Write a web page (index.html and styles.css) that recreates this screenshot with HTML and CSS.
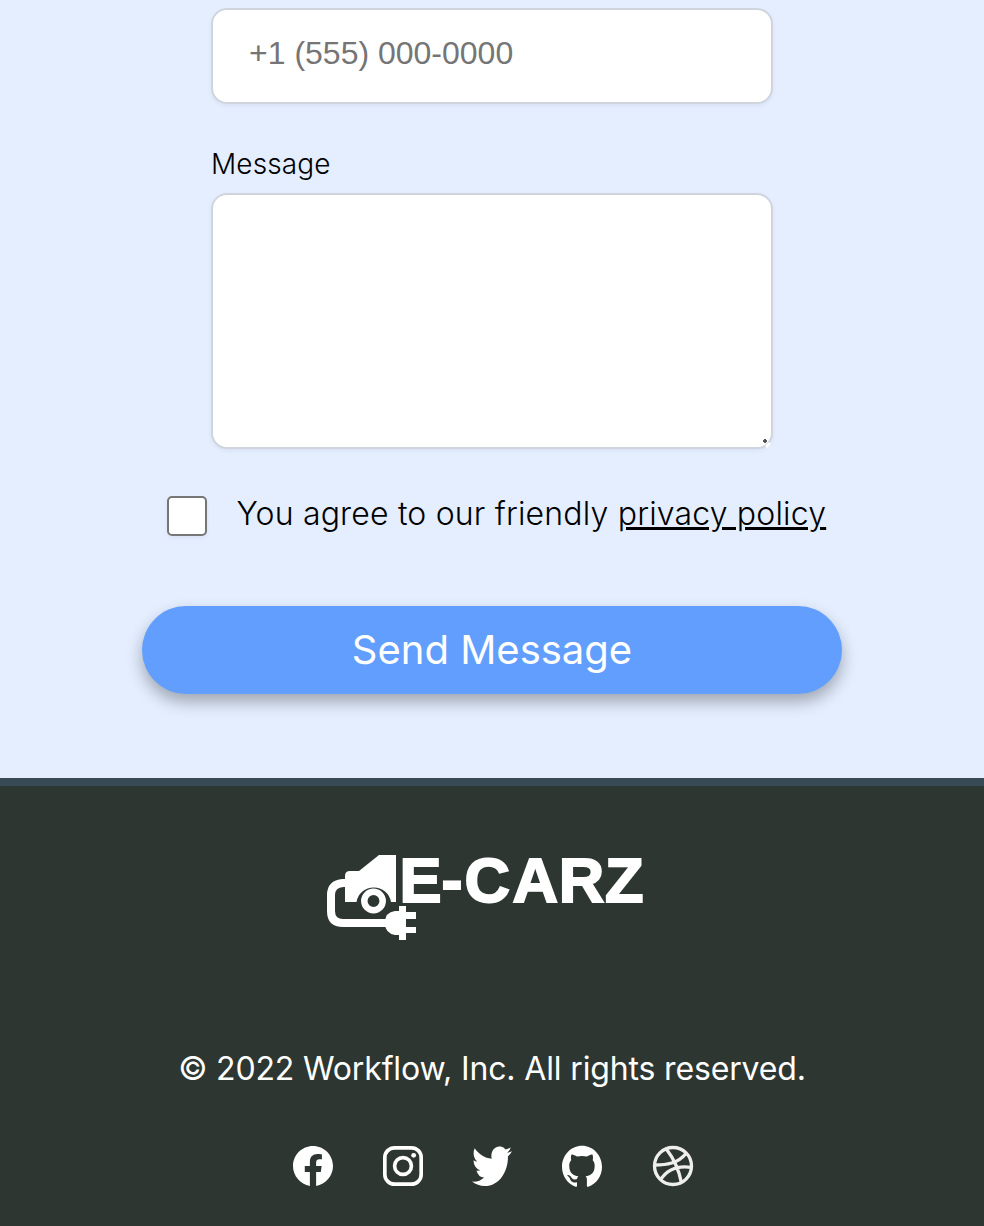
FILE: index.html
```html
<!DOCTYPE html>
<html lang="en">
<head>
<meta charset="utf-8">
<title>Contact | E-Carz</title>
<link rel="stylesheet" href="styles.css">
</head>
<body>
<main class="contact">
  <form class="form">
    <input class="field phone" type="tel" placeholder="+1 (555) 000-0000" aria-label="Phone number">
    <label class="label" for="message">Message</label>
    <div class="message-wrap">
      <textarea class="field message" id="message"></textarea>
      <svg class="grip" width="10" height="10" viewBox="0 0 10 10"><path fill="#fff" d="M4 8L8 4L10 6L6 10Z"/><path fill="#555" d="M2 2H3V1H5V2H6V4H5V5H3V4H2Z"/></svg>
    </div>
    <div class="agree">
      <input class="check" type="checkbox" id="agree">
      <label class="agree-text" for="agree">You agree to our friendly <a class="policy" href="#">privacy policy</a></label>
    </div>
    <button class="send" type="button">Send Message</button>
  </form>
</main>
<footer class="footer">
  <svg class="logo" width="336" height="120" viewBox="326 836 336 120" role="img" aria-label="E-Carz">
    <path class="logo-fill" d="M345 902V876Q345 871 350 871H359L379 855H396V902H391A17.500 17.500 0 0 0 356.500 902Z"/>
    <circle class="logo-ring" cx="373.500" cy="901" r="9.200"/>
    <path class="logo-cable" d="M347 883H343Q331 884 331 895V911Q331 923 343 923H388"/>
    <path class="logo-fill" d="M399 906H406V912H416V919H406V927H416V933H406V940H399V935H395Q385 933 385 923Q385 912 395 911H399Z"/>
    <text class="logo-text" x="399.500 441.500 464.500 512.500 558.800 605" y="902.200">E-CARZ</text>
  </svg>
  <p class="copy">© 2022 Workflow, Inc. All rights reserved.</p>
  <nav class="social">
    <a class="social-link" href="#" aria-label="Facebook"><svg class="icon" viewBox="0 0 24 24"><path d="M24 12.073c0-6.627-5.373-12-12-12s-12 5.373-12 12c0 5.990 4.388 10.954 10.125 11.854v-8.385H7.078v-3.470h3.047V9.430c0-3.007 1.792-4.669 4.533-4.669 1.312 0 2.686.235 2.686.235v2.953H15.830c-1.491 0-1.956.925-1.956 1.874v2.250h3.328l-.532 3.470h-2.796v8.385C19.612 23.027 24 18.062 24 12.073z"/></svg></a>
    <a class="social-link" href="#" aria-label="Instagram"><svg class="icon" viewBox="0 0 24 24"><rect class="line" x="1.100" y="1.100" width="21.800" height="21.800" rx="5.800"/><circle class="line" cx="12" cy="12" r="5.050"/><circle cx="18.400" cy="5.600" r="1.450"/></svg></a>
    <a class="social-link" href="#" aria-label="Twitter"><svg class="icon" viewBox="0 0 24 24"><path transform="translate(0 -2.500) scale(1 1.220)" d="M23.953 4.570a10 10 0 01-2.825.775 4.958 4.958 0 002.163-2.723c-.951.555-2.005.959-3.127 1.184a4.920 4.920 0 00-8.384 4.482C7.690 8.095 4.067 6.130 1.640 3.162a4.822 4.822 0 00-.666 2.475c0 1.710.870 3.213 2.188 4.096a4.904 4.904 0 01-2.228-.616v.060a4.923 4.923 0 003.946 4.827 4.996 4.996 0 01-2.212.085 4.936 4.936 0 004.604 3.417 9.867 9.867 0 01-6.102 2.105c-.390 0-.779-.023-1.170-.067a13.995 13.995 0 007.557 2.209c9.053 0 13.998-7.496 13.998-13.985 0-.210 0-.420-.015-.630A9.935 9.935 0 0024 4.590z"/></svg></a>
    <a class="social-link" href="#" aria-label="GitHub"><svg class="icon" viewBox="0 0 24 24"><path transform="translate(0 -.500) scale(1 1.055)" d="M12 .297c-6.630 0-12 5.373-12 12 0 5.303 3.438 9.800 8.205 11.385.600.113.820-.258.820-.577 0-.285-.010-1.040-.015-2.040-3.338.724-4.042-1.610-4.042-1.610C4.422 18.070 3.633 17.700 3.633 17.700c-1.087-.744.084-.729.084-.729 1.205.084 1.838 1.236 1.838 1.236 1.070 1.835 2.809 1.305 3.495.998.108-.776.417-1.305.760-1.605-2.665-.300-5.466-1.332-5.466-5.930 0-1.310.465-2.380 1.235-3.220-.135-.303-.540-1.523.105-3.176 0 0 1.005-.322 3.300 1.230.960-.267 1.980-.399 3-.405 1.020.006 2.040.138 3 .405 2.280-1.552 3.285-1.230 3.285-1.230.645 1.653.240 2.873.120 3.176.765.840 1.230 1.910 1.230 3.220 0 4.610-2.805 5.625-5.475 5.920.420.360.810 1.096.810 2.220 0 1.606-.015 2.896-.015 3.286 0 .315.210.690.825.570C20.565 22.092 24 17.592 24 12.297c0-6.627-5.373-12-12-12"/></svg></a>
    <a class="social-link dribbble" href="#" aria-label="Dribbble"><svg class="icon" viewBox="0 0 24 24"><g class="seam"><circle cx="12" cy="12" r="11.100"/><path d="M1 11.400C8 11.400 15 10.500 19.800 4.500M8 1.800C12 7 15.500 14 17 21.800M4.600 20.200C8.500 14 14 11.500 23 12.800"/></g></svg></a>
  </nav>
</footer>
</body>
</html>
```
FILE: styles.css
```css
* { box-sizing: border-box; }
body { margin: 0; background: #2d3631; font-family: Inter, "Liberation Sans", sans-serif; }
.contact { height: 778px; padding-top: 8px; background: #e4eeff; }
.form { display: flex; flex-direction: column; align-items: center; }
.field {
  width: 562px;
  border: 2px solid #d0d5dd;
  border-radius: 16px;
  background: #fff;
  box-shadow: 0 2px 4px rgba(16, 24, 40, .05);
  outline: none;
}
.phone { height: 96px; padding: 0 36px 6px; font: 32px "Liberation Sans", Arial, sans-serif; }
.phone::placeholder { color: #757575; }
.label { width: 562px; margin-top: 40px; color: #000; font-size: 28px; font-weight: 330; line-height: 40px; letter-spacing: .1px; }
.message-wrap { position: relative; margin-top: 9px; }
.message { display: block; height: 256px; padding: 20px 36px; resize: none; }
.grip { position: absolute; right: 2px; bottom: 1px; }
.agree { display: flex; align-items: center; gap: 30px; width: 652px; height: 48px; margin-top: 41px; }
.check {
  flex: none;
  appearance: none;
  width: 40px;
  height: 40px;
  margin: 4px 0 0 .5px;
  border: 2px solid #767676;
  border-radius: 5px;
  background: #fff;
  box-shadow: 0 2px 4px rgba(16, 24, 40, .05);
}
.agree-text { color: #000; font-size: 32px; font-weight: 330; line-height: 48px; letter-spacing: .18px; white-space: nowrap; }
.policy { color: #000; }
.send {
  width: 700px;
  height: 88px;
  margin-top: 68px;
  padding: 0 0 2px;
  border: 0;
  border-radius: 44px;
  background: #629efd;
  box-shadow: 0 8px 16px rgba(0, 0, 0, .3);
  color: #fff;
  font: 400 40px Inter, sans-serif;
}
.footer { display: flex; flex-direction: column; align-items: center; height: 448px; border-top: 8px solid #374a56; background: #2d3631; color: #fff; }
.logo { display: block; margin: 50px 0 0 4px; }
.logo-fill { fill: #fff; }
.logo-ring { fill: none; stroke: #fff; stroke-width: 6.5; }
.logo-cable { fill: none; stroke: #fff; stroke-width: 8; }
.logo-text { fill: #fff; stroke: #fff; stroke-width: 2; font: 700 63px "Liberation Sans", Arial, sans-serif; }
.copy { margin: 89px 0 0; font-size: 32px; line-height: 48px; letter-spacing: -.15px; white-space: nowrap; }
.social { display: flex; gap: 49.7px; margin: 53px 0 0 1.5px; }
.social-link { display: block; width: 40px; height: 40px; }
.dribbble { margin-left: .8px; }
.icon { display: block; width: 40px; height: 40px; overflow: visible; fill: #fff; }
.line { fill: none; stroke: #fff; stroke-width: 2.2; }
.seam { fill: none; stroke: #eee; stroke-width: 2; }
```
